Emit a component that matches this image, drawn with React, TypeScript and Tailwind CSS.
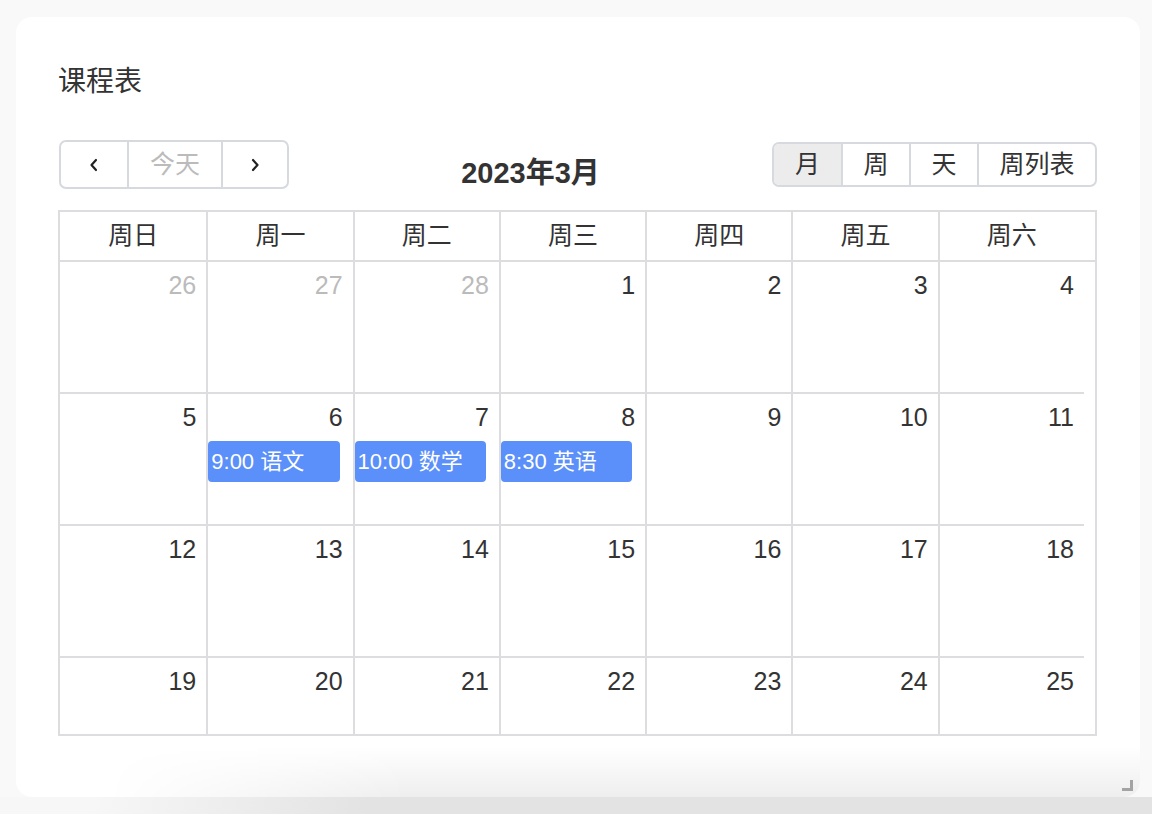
import React from "react";

const FONT = { fontFamily: '"Liberation Sans", "Noto Sans CJK SC", sans-serif' };

type Ev = { day: number; text: string };
const events: Ev[] = [
  { day: 6, text: "9:00 语文" },
  { day: 7, text: "10:00 数学" },
  { day: 8, text: "8:30 英语" },
];

const weeks: { d: number; other: boolean }[][] = [
  [
    { d: 26, other: true },
    { d: 27, other: true },
    { d: 28, other: true },
    { d: 1, other: false },
    { d: 2, other: false },
    { d: 3, other: false },
    { d: 4, other: false },
  ],
  [5, 6, 7, 8, 9, 10, 11].map((d) => ({ d, other: false })),
  [12, 13, 14, 15, 16, 17, 18].map((d) => ({ d, other: false })),
  [19, 20, 21, 22, 23, 24, 25].map((d) => ({ d, other: false })),
];

const heads = ["周日", "周一", "周二", "周三", "周四", "周五", "周六"];

function Chevron({ dir }: { dir: "left" | "right" }) {
  return (
    <svg width="10" height="14" viewBox="0 0 10 14" fill="none">
      <polyline
        points={dir === "left" ? "7,2 2.5,7 7,12" : "3,2 7.5,7 3,12"}
        stroke="#222"
        strokeWidth="2.2"
        strokeLinecap="round"
        strokeLinejoin="round"
      />
    </svg>
  );
}

export default function App() {
  return (
    <div className="w-[1152px] h-[814px] bg-[#f9f9f9] flex flex-col overflow-hidden" style={FONT}>
      <div className="pt-[17px] pl-[16px] pr-[12px]">
        <div className="relative h-[780px] bg-white rounded-[16px] pl-[42px] pr-[43px] pt-[45px] overflow-hidden">
          <div className="h-[40px] leading-[40px] text-[28px] text-[#333]">课程表</div>

          <div className="mt-[38px] h-[49px] flex justify-between items-start text-[#333]">
            <div className="ml-[1px] flex h-[49px] border-2 border-[#d6d9de] rounded-[7px] overflow-hidden">
              <div className="w-[66px] flex items-center justify-center">
                <Chevron dir="left" />
              </div>
              <div className="w-[94px] flex items-center justify-center border-l-2 border-[#d6d9de] text-[25px] text-[#bbbbbb]">
                今天
              </div>
              <div className="w-[66px] flex items-center justify-center border-l-2 border-[#d6d9de]">
                <Chevron dir="right" />
              </div>
            </div>

            <div className="self-end text-[29px] font-bold text-[#333] leading-[34px] mb-[-1px]">2023年3月</div>

            <div className="mt-[2px] flex h-[45px] border-2 border-[#d6d9de] rounded-[7px] overflow-hidden text-[25px]">
              <div className="w-[67px] flex items-center justify-center bg-[#ececec]">月</div>
              <div className="w-[68px] flex items-center justify-center border-l-2 border-[#d6d9de]">周</div>
              <div className="w-[68px] flex items-center justify-center border-l-2 border-[#d6d9de]">天</div>
              <div className="w-[118px] flex items-center justify-center border-l-2 border-[#d6d9de]">周列表</div>
            </div>
          </div>

          <div className="mt-[21px] border-2 border-[#dddde0] text-[#333]">
            <div className="grid grid-cols-[repeat(7,minmax(0,1fr))_11px] h-[50px] border-b-2 border-[#dddde0]">
              {heads.map((h, i) => (
                <div
                  key={h}
                  className={`flex items-center justify-center text-[25px] ${i > 0 ? "border-l-2 border-[#dddde0]" : ""}`}
                >
                  {h}
                </div>
              ))}
              <div />
            </div>
            <div className="h-[472px] overflow-hidden pr-[11px]">
              {weeks.map((w, wi) => (
                <div key={wi} className="grid grid-cols-7 h-[132px] border-b-2 border-[#dddde0]">
                  {w.map((c, ci) => {
                    const ev = !c.other ? events.find((e) => e.day === c.d && wi === 1) : undefined;
                    return (
                      <div
                        key={ci}
                        className={`flex flex-col ${ci > 0 ? "border-l-2 border-[#dddde0]" : ""}`}
                      >
                        <div
                          className={`text-right pr-[10px] pt-[8px] h-[42px] leading-[30px] text-[25px] ${
                            c.other ? "text-[#bbbbbb]" : "text-[#333]"
                          }`}
                        >
                          {c.d}
                        </div>
                        {ev && (
                          <div className="mt-[5px] mr-[13px] h-[41px] rounded-[4px] bg-[#5b8ff9] text-white text-[22px] leading-[41px] pl-[3px] whitespace-nowrap overflow-hidden">
                            {ev.text}
                          </div>
                        )}
                      </div>
                    );
                  })}
                </div>
              ))}
            </div>
          </div>

          <div className="pointer-events-none absolute left-0 right-0 bottom-0 h-[50px] bg-[linear-gradient(to_bottom,rgba(0,0,0,0),rgba(0,0,0,0.065))] [mask-image:linear-gradient(to_right,transparent_8%,black_35%)]" />

          <div className="absolute right-[7px] bottom-[6px] w-[11px] h-[11px]">
            <div className="absolute right-0 top-0 w-[3px] h-[11px] bg-[#a3a3a3]" />
            <div className="absolute right-0 bottom-0 w-[11px] h-[3px] bg-[#a3a3a3]" />
          </div>
        </div>
      </div>
      <div className="flex-1 bg-[linear-gradient(to_right,#f7f7f7_8%,#e3e3e3_32%)]" />
    </div>
  );
}
